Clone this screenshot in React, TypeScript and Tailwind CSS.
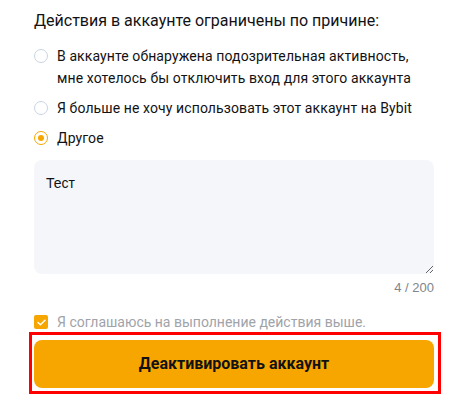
import React, { useState } from "react";

const reasons = [
  "В аккаунте обнаружена подозрительная активность, мне хотелось бы отключить вход для этого аккаунта",
  "Я больше не хочу использовать этот аккаунт на Bybit",
  "Другое",
];

function Radio({ checked }: { checked: boolean }) {
  return checked ? (
    <span className="mt-[4px] flex h-[14px] w-[14px] shrink-0 items-center justify-center rounded-full border-[1.5px] border-[#f7a600]">
      <span className="h-[6px] w-[6px] rounded-full bg-[#f7a600]" />
    </span>
  ) : (
    <span className="mt-[4px] h-[14px] w-[14px] shrink-0 rounded-full border border-[#c9d4e3]" />
  );
}

export default function App() {
  const [selected, setSelected] = useState(2);
  const [text, setText] = useState("Тест");

  return (
    <div
      className="min-h-[405px] w-[471px] bg-white pl-[34px] pt-[9px] text-[#121214]"
      style={{ fontFamily: "Roboto, 'Noto Sans', sans-serif" }}
    >
      <div className="w-[400px]">
        <h2 className="text-[16px] leading-[24px] font-normal">
          Действия в аккаунте ограничены по причине:
        </h2>

        <div className="mt-[12px] flex flex-col gap-[8px]">
          {reasons.map((r, i) => (
            <label
              key={i}
              className="flex cursor-pointer items-start gap-[9px] text-[14px] leading-[22px] tracking-[0.1px]"
              onClick={() => setSelected(i)}
            >
              <Radio checked={selected === i} />
              <span className="max-w-[360px]">{r}</span>
            </label>
          ))}
        </div>

        <textarea
          value={text}
          onChange={(e) => setText(e.target.value)}
          maxLength={200}
          className="mt-[11px] block h-[114px] w-[400px] rounded-[8px] bg-[#f5f6fa] px-[12px] pt-[13px] text-[14px] leading-[20px] text-[#121214] outline-none"
          style={{ fontFamily: "'Liberation Sans', Arial, sans-serif" }}
        />
        <div
          className="mt-[4px] text-right text-[13px] leading-[20px] text-[#81858c]"
          style={{ fontFamily: "'Liberation Sans', Arial, sans-serif" }}
        >
          {text.length} / 200
        </div>

        <label className="mt-[14px] flex items-center gap-[9px] text-[14px] leading-[20px] text-[#9fa3aa]">
          <span className="flex h-[14px] w-[14px] items-center justify-center rounded-[2px] bg-[#f7a600]">
            <svg width="9" height="7" viewBox="0 0 9 7" fill="none">
              <path d="M1 3.5L3.4 5.8L8 1.2" stroke="white" strokeWidth="1.5" strokeLinecap="round" strokeLinejoin="round" />
            </svg>
          </span>
          Я соглашаюсь на выполнение действия выше.
        </label>
      </div>

      <div className="ml-[-5px] w-[412px] border-[3px] border-[#ff0000] pb-[3px] pl-[2px] pr-[4px] pt-[5px]">
        <button className="flex h-[48px] w-[400px] items-center justify-center rounded-[8px] bg-[#f7a600] text-[16px] font-bold text-[#121214]">
          Деактивировать аккаунт
        </button>
      </div>
    </div>
  );
}
